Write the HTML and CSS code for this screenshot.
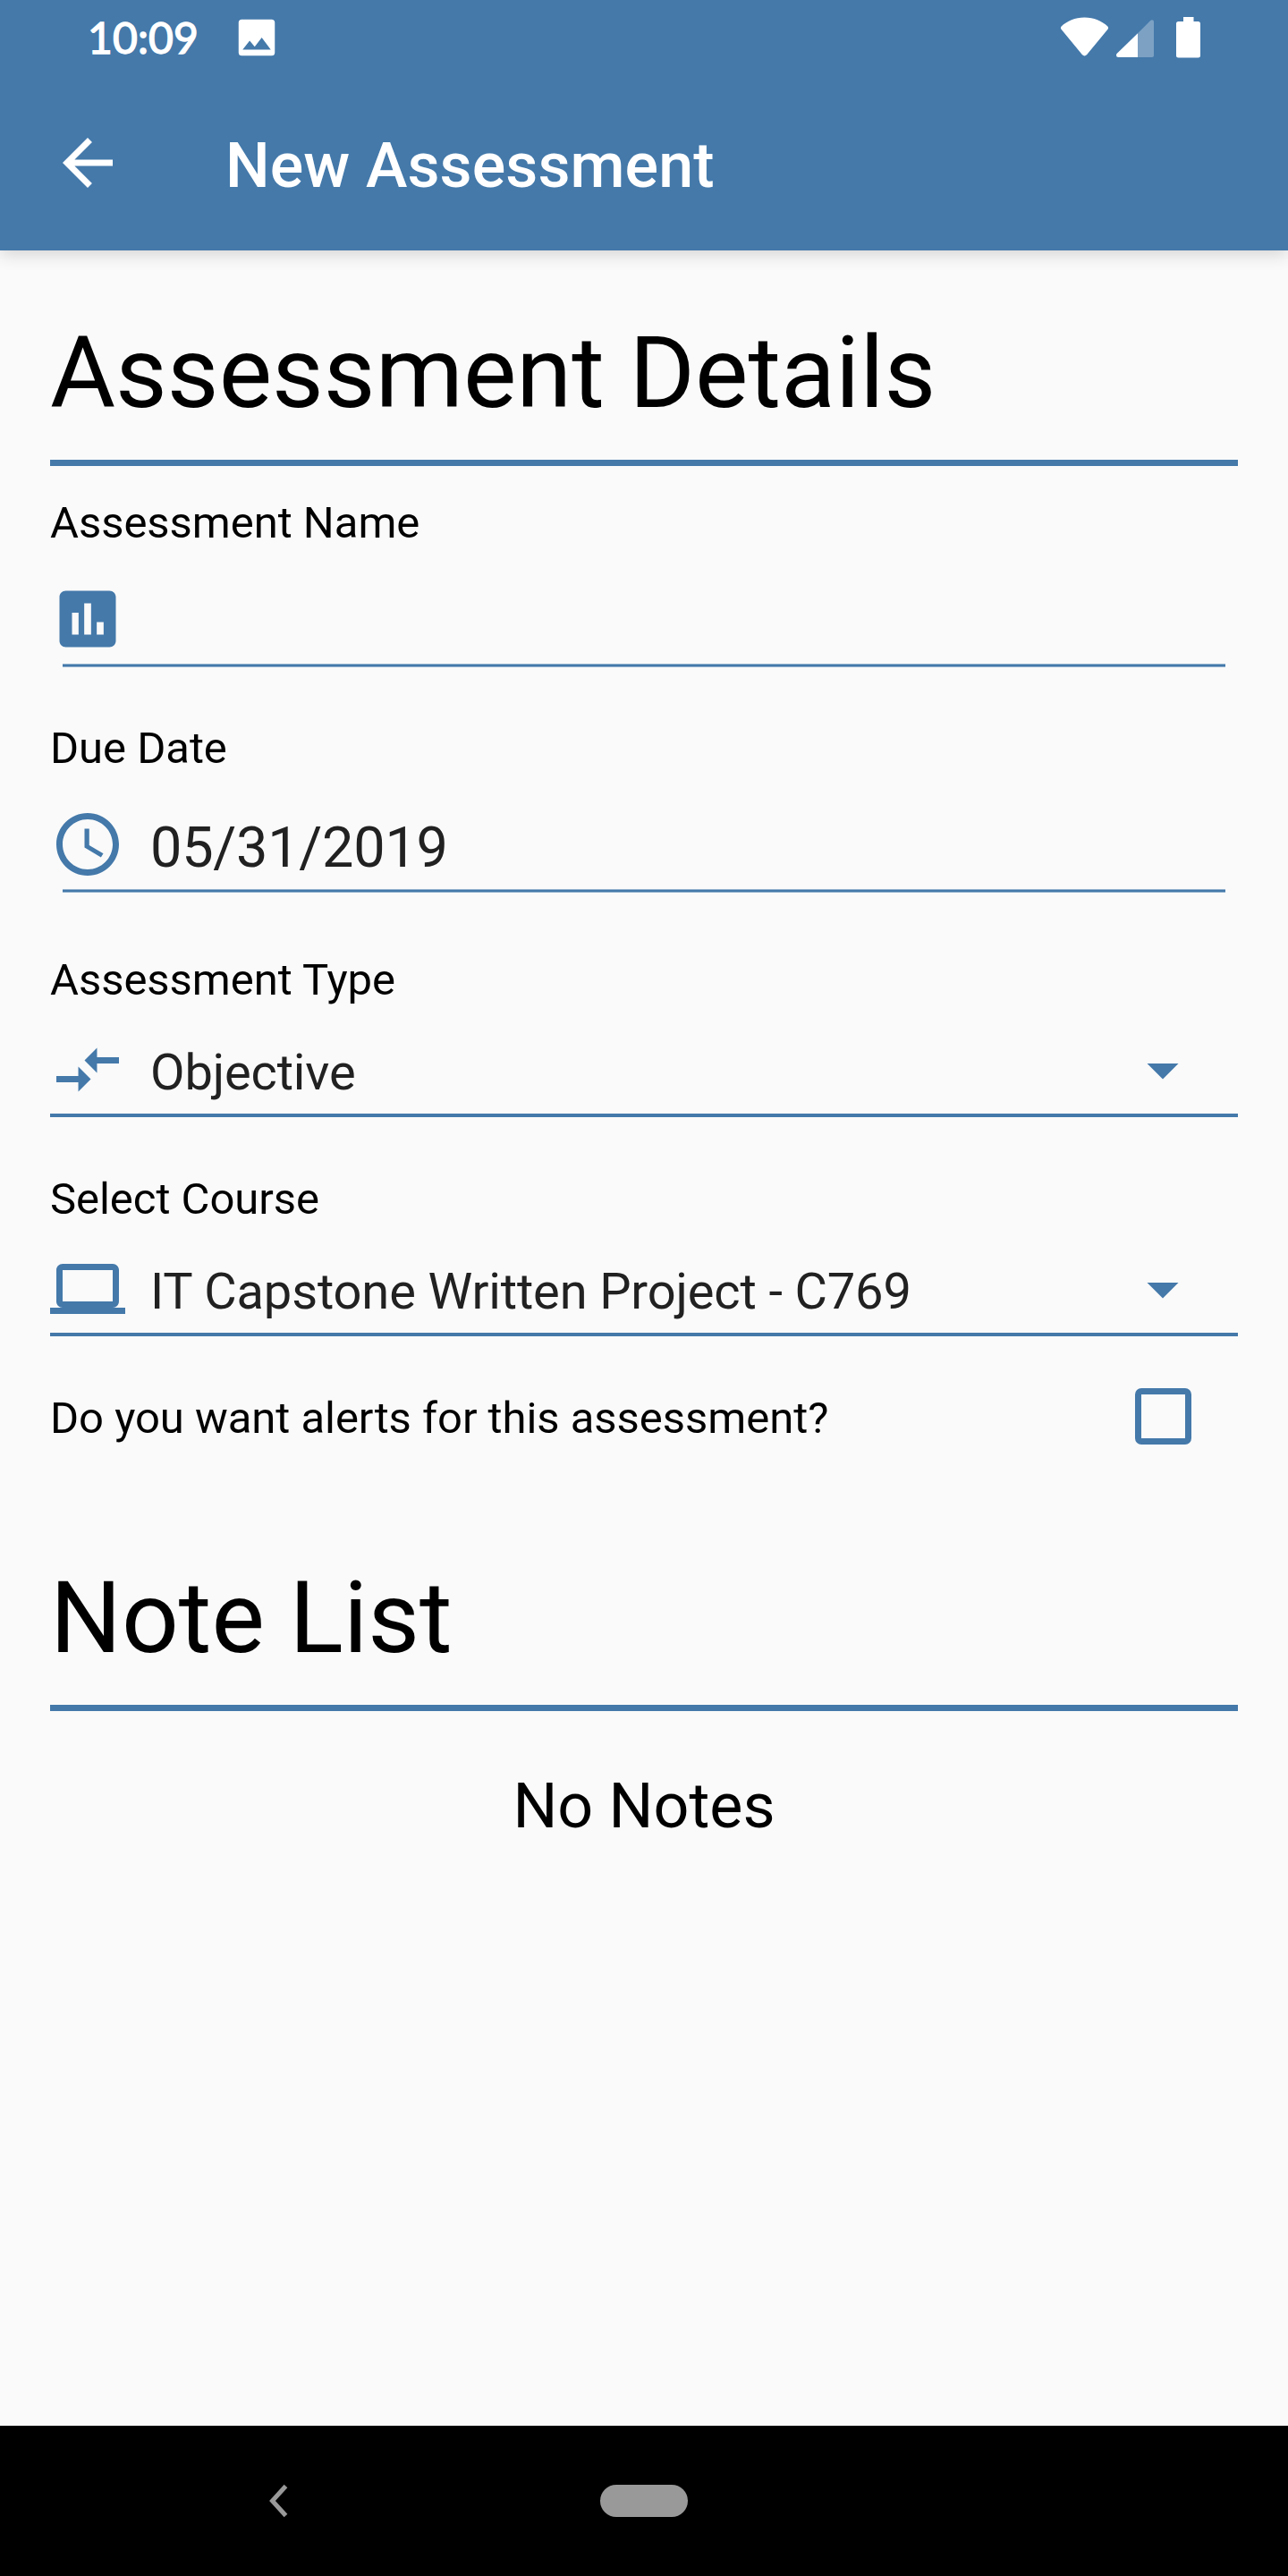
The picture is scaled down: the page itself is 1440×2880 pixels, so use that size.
FILE: index.html
```html
<!DOCTYPE html>
<html lang="en">
<head>
<meta charset="utf-8">
<title>New Assessment</title>
<link rel="stylesheet" href="styles.css">
</head>
<body>
<div class="screen">
  <header class="top">
    <div class="status">
      <span class="time">10:09</span>
      <svg class="notif" viewBox="0 0 24 24"><path d="M21 19V4.600c0-1-.6-1.600-1.600-1.600H4.600c-1 0-1.600.6-1.600 1.600v14.800c0 1 .6 1.600 1.600 1.600h14.800c1 0 1.600-.6 1.600-1.600zM8.500 13.500l2.500 3.010L14.500 12l4.500 6H5l3.500-4.500z"/></svg>
      <svg class="indicators" viewBox="0 0 160 50">
        <path d="M1.600 14.500C8 8.500 17 4.500 27.500 4.500S47 8.500 53.400 14.500q1.300 1.400.3 3L30.200 46q-2.700 2.800-5.400 0L1.300 17.500q-1-1.600.3-3z"/>
        <path d="M87 22.200V49H65.500q-2.500 0-2.500-2.500 0-1 .8-1.800z"/>
        <path class="dim" d="M87 22.200L101 8.200q1-1 2-1 2 0 2 2V47q0 2-2 2H87z"/>
        <path d="M138 4h11.500v5H154.500q2.500 0 2.500 2.500v35.500q0 2.500-2.500 2.500H132.500q-2.500 0-2.500-2.500V11.500q0-2.500 2.500-2.500H138z"/>
      </svg>
    </div>
    <div class="toolbar">
      <svg class="icon" viewBox="0 0 24 24"><path d="M20 11H7.830l5.590-5.590L12 4l-8 8 8 8 1.410-1.410L7.830 13H20v-2z"/></svg>
      <div class="title">New Assessment</div>
    </div>
  </header>
  <main class="content">
    <h1 class="heading">Assessment Details</h1>
    <div class="field name">
      <div class="label">Assessment Name</div>
      <div class="row">
        <svg class="icon" viewBox="0 0 24 24"><path d="M19 3H5c-1.100 0-2 .9-2 2v14c0 1.100.9 2 2 2h14c1.100 0 2-.9 2-2V5c0-1.100-.9-2-2-2zM9.100 17H7v-7h2.100v7zm4 0H10.900V7h2.200v10zm4 0h-2.200v-4h2.200v4z"/></svg>
      </div>
      <div class="underline"></div>
    </div>
    <div class="field date">
      <div class="label">Due Date</div>
      <div class="row">
        <svg class="icon" viewBox="0 0 24 24"><path d="M11.990 2C6.470 2 2 6.480 2 12s4.470 10 9.990 10C17.520 22 22 17.520 22 12S17.520 2 11.990 2zM12 20c-4.420 0-8-3.580-8-8s3.580-8 8-8 8 3.580 8 8-3.580 8-8 8zm.5-13H11v6l5.250 3.150.75-1.230-4.500-2.670z"/></svg>
        <span class="value large">05/31/2019</span>
      </div>
      <div class="underline"></div>
    </div>
    <div class="field select type">
      <div class="label">Assessment Type</div>
      <div class="row">
        <svg class="icon" viewBox="0 0 24 24"><path d="M9.010 14H2v2h7.010v3L13 15l-3.990-4v3zm5.980-1v-3H22V8h-7.010V5L11 9l3.990 4z"/></svg>
        <span class="value">Objective</span>
        <svg class="icon" viewBox="0 0 24 24"><path d="M7 10l5 5 5-5z"/></svg>
      </div>
    </div>
    <div class="field select course">
      <div class="label">Select Course</div>
      <div class="row">
        <svg class="icon" viewBox="0 0 24 24"><path d="M20 18c1.100 0 1.990-.9 1.990-2L22 6c0-1.100-.9-2-2-2H4c-1.100 0-2 .9-2 2v10c0 1.100.9 2 2 2H0v2h24v-2h-4zM4 6h16v10H4V6z"/></svg>
        <span class="value">IT Capstone Written Project - C769</span>
        <svg class="icon" viewBox="0 0 24 24"><path d="M7 10l5 5 5-5z"/></svg>
      </div>
    </div>
    <div class="alerts">
      <div class="label">Do you want alerts for this assessment?</div>
      <div class="checkbox"></div>
    </div>
    <h1 class="heading">Note List</h1>
    <div class="empty">No Notes</div>
  </main>
  <nav class="navbar">
    <svg class="nav-back" viewBox="0 0 24 38"><path d="M20.500 2.500L5.500 19l15 16.500"/></svg>
    <div class="pill"></div>
  </nav>
</div>
</body>
</html>
```

FILE: styles.css
```css
* { box-sizing: border-box; }
body { margin: 0; font-family: Roboto, "Liberation Sans", sans-serif; color: #000; background: #fafafa; }
.screen { width: 1440px; height: 2880px; display: flex; flex-direction: column; background: #fafafa; overflow: hidden; }
svg { display: block; flex: none; }
.icon { width: 84px; height: 84px; fill: #4479aa; }

.top { height: 280px; background: #4479aa; color: #fff; box-shadow: 0 4px 18px rgba(0, 0, 0, .16); }
.top svg { fill: #fff; }
.status { height: 84px; display: flex; align-items: flex-start; padding: 15px 95px 0 98px; }
.time { font: 400 48px/54px Lato, sans-serif; -webkit-text-stroke: 1.400px #fff; width: 161.500px; letter-spacing: .1px; white-space: nowrap; }
.notif { width: 54px; height: 54px; }
.indicators { width: 160px; height: 50px; margin-left: auto; }
.indicators .dim { opacity: .3; }
.toolbar { height: 196px; display: flex; align-items: center; padding-left: 56px; gap: 112px; }
.title { font-size: 70px; font-weight: 500; line-height: 82px; padding-top: 6px; letter-spacing: .1px; }

.content { flex: 1; padding: 0 56px; }
.heading { margin: 0; height: 241px; padding-top: 71px; font-size: 112px; font-weight: 400; line-height: 132px; border-bottom: 7px solid #4479aa; }
.label { font-size: 49px; line-height: 58px; letter-spacing: -.040px; white-space: nowrap; }
.row { display: flex; align-items: center; gap: 28px; }
.name { margin-top: 35px; }
.date { margin-top: 62px; }
.type { margin-top: 69px; }
.course { margin-top: 63px; }
.name .row, .date .row { height: 128px; padding: 36px 0 8px; }
.select .row { height: 124px; padding: 29px 42px 7px 0; border-bottom: 4px solid #4479aa; }
.underline { height: 4px; margin: 0 14px; background: linear-gradient(#8fafcc 1px, #4479aa 1px, #4479aa 3px, #8fafcc 3px); }
.value { flex: 1; font-size: 56px; line-height: 66px; padding-top: 6px; letter-spacing: -.140px; color: #212121; white-space: nowrap; }
.value.large { font-size: 63px; line-height: 74px; padding-top: 7px; letter-spacing: -.250px; }
.alerts { height: 84px; margin: 47px 0; padding-right: 52.500px; display: flex; align-items: center; justify-content: space-between; }
.alerts .label { padding-top: 5px; }
.checkbox { width: 63px; height: 63px; border: 7px solid #4479aa; border-radius: 7px; }
.empty { margin-top: 65px; font-size: 70px; line-height: 82px; text-align: center; }

.navbar { height: 168px; background: #000; display: flex; align-items: center; padding-left: 299px; gap: 348px; }
.nav-back { width: 24px; height: 38px; fill: none; stroke: #999; stroke-width: 5; }
.pill { width: 98px; height: 36px; border-radius: 18px; background: #999; }
```
